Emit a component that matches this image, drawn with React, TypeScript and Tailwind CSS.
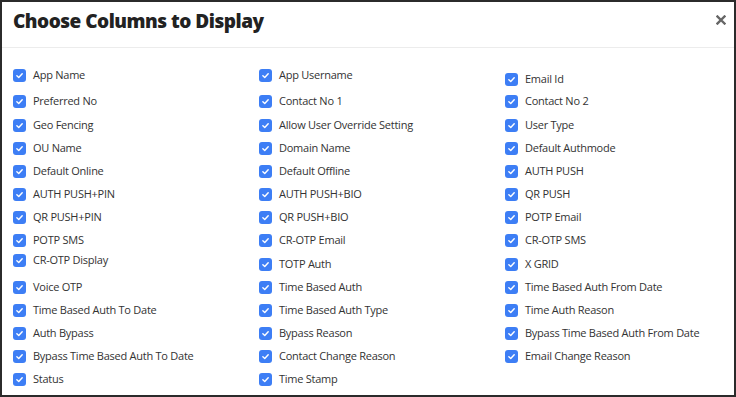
const rows: [string, string, string][] = [
  ["App Name", "App Username", "Email Id"],
  ["Preferred No", "Contact No 1", "Contact No 2"],
  ["Geo Fencing", "Allow User Override Setting", "User Type"],
  ["OU Name", "Domain Name", "Default Authmode"],
  ["Default Online", "Default Offline", "AUTH PUSH"],
  ["AUTH PUSH+PIN", "AUTH PUSH+BIO", "QR PUSH"],
  ["QR PUSH+PIN", "QR PUSH+BIO", "POTP Email"],
  ["POTP SMS", "CR-OTP Email", "CR-OTP SMS"],
  ["CR-OTP Display", "TOTP Auth", "X GRID"],
  ["Voice OTP", "Time Based Auth", "Time Based Auth From Date"],
  ["Time Based Auth To Date", "Time Based Auth Type", "Time Auth Reason"],
  ["Auth Bypass", "Bypass Reason", "Bypass Time Based Auth From Date"],
  ["Bypass Time Based Auth To Date", "Contact Change Reason", "Email Change Reason"],
  ["Status", "Time Stamp", ""],
];

// small per-row nudges so the rows line up with the original spacing
const rowShift = ["", "mt-[3px]", "mt-[1px]", "", "", "", "", "", "mt-[1px]", "", "", "", "", ""];

function Check({ label, shift }: { label: string; shift?: string }) {
  if (!label) return <div />;
  return (
    <label className={`flex h-[23px] items-center gap-[7px] ${shift ?? ""}`}>
      <span className="flex h-[13px] w-[13px] shrink-0 items-center justify-center rounded-[3px] bg-[#3d7ef5]">
        <svg viewBox="0 0 12 12" className="h-[9px] w-[9px]">
          <path d="M2.5 6.3 5 8.6 9.6 3.6" fill="none" stroke="#fff" strokeWidth="1.9" strokeLinecap="round" strokeLinejoin="round" />
        </svg>
      </span>
      <span className="text-[11px] tracking-[-0.25px] text-[#333]">{label}</span>
    </label>
  );
}

export default function App() {
  return (
    <div
      className="h-[397px] w-[736px] overflow-hidden border-2 border-[#2b2b2b] bg-white"
      style={{ fontFamily: '"Open Sans", "Liberation Sans", sans-serif' }}
    >
      <div className="flex h-[46px] items-start justify-between border-b border-[#ececec] pl-[11px] pr-[8px] pt-[5px]">
        <h2 className="text-[19px] font-extrabold tracking-[-0.5px] text-[#222]">Choose Columns to Display</h2>
        <svg viewBox="0 0 10 10" className="mt-[8px] h-[10px] w-[10px]">
          <path d="M1.5 1.5 8.5 8.5M8.5 1.5 1.5 8.5" stroke="#666" strokeWidth="2.4" strokeLinecap="square" />
        </svg>
      </div>
      <div className="grid grid-cols-[246px_246px_1fr] pl-[11px] pt-[16px]">
        {rows.map((r, i) => (
          <div key={i} className="contents">
            <Check label={r[0]} shift={i === 8 ? "-mt-[3px] mb-[3px]" : rowShift[i]} />
            <Check label={r[1]} shift={rowShift[i]} />
            <Check label={r[2]} shift={i === 0 ? "mt-[4px] -mb-[4px]" : rowShift[i]} />
          </div>
        ))}
      </div>
    </div>
  );
}
